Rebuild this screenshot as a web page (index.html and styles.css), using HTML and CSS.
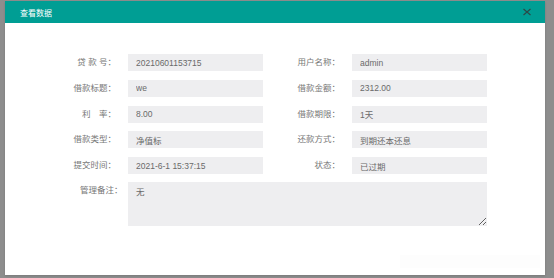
FILE: index.html
```html
<!DOCTYPE html>
<html lang="zh-CN">
<head>
    <meta charset="UTF-8">
    <title>查看数据</title>
    <link rel="stylesheet" href="styles.css">
</head>
<body>
    <div class="modal">
        <div class="modal-header">
            <span class="modal-title">查看数据</span>
            <span class="modal-close">
                <svg width="8" height="8" viewBox="0 0 8 8"><path d="M0.5 1L7.5 7M7.5 1L0.5 7" stroke="#2b4a48" stroke-width="1.2" fill="none"/></svg>
            </span>
        </div>
        <div class="modal-body">
            <div class="form">
                <label class="label">贷 款 号：</label>
                <input class="field" type="text" value="20210601153715" readonly>
                <label class="label">用户名称：</label>
                <input class="field" type="text" value="admin" readonly>

                <label class="label">借款标题：</label>
                <input class="field" type="text" value="we" readonly>
                <label class="label">借款金额：</label>
                <input class="field" type="text" value="2312.00" readonly>

                <label class="label">利　率：</label>
                <input class="field" type="text" value="8.00" readonly>
                <label class="label">借款期限：</label>
                <input class="field" type="text" value="1天" readonly>

                <label class="label">借款类型：</label>
                <input class="field" type="text" value="净值标" readonly>
                <label class="label">还款方式：</label>
                <input class="field" type="text" value="到期还本还息" readonly>

                <label class="label">提交时间：</label>
                <input class="field" type="text" value="2021-6-1 15:37:15" readonly>
                <label class="label">状态：</label>
                <input class="field" type="text" value="已过期" readonly>

                <label class="label label-top">管理备注：</label>
                <textarea class="remark" readonly>无</textarea>
            </div>
            <div class="modal-footer"></div>
        </div>
    </div>
</body>
</html>
```

FILE: styles.css
```css
body {
    margin: 0;
    height: 278px;
    background-color: #8d8d8d;
    font-family: "Liberation Sans", "Noto Sans CJK SC", sans-serif;
    overflow: hidden;
}
.modal {
    width: 540px;
    height: 274px;
    margin: 1px 0 0 5px;
    background-color: #fff;
    box-shadow: 0 1px 2px rgba(0, 0, 0, 0.15);
    display: flex;
    flex-direction: column;
}
.modal-header {
    height: 22px;
    background-color: #009e94;
    display: flex;
    align-items: center;
    justify-content: space-between;
    padding: 0 14px 0 15px;
}
.modal-title {
    color: #fff;
    font-size: 8px;
}
.modal-close {
    display: flex;
    align-items: center;
}
.modal-body {
    flex: 1;
    padding-top: 31px;
    display: flex;
    flex-direction: column;
    justify-content: space-between;
}
.form {
    display: grid;
    grid-template-columns: 111px 135px 65px 135px;
    grid-auto-rows: 17px;
    column-gap: 12px;
    row-gap: 8.8px;
}
.label {
    font-size: 8.5px;
    color: #777;
    text-align: right;
    line-height: 17px;
    white-space: nowrap;
}
.label-top {
    line-height: 12px;
    padding-top: 1px;
    margin-right: -6.5px;
}
.field {
    height: 17px;
    box-sizing: border-box;
    border: none;
    outline: none;
    background-color: #eeeef0;
    padding: 0 8px;
    font-family: inherit;
    font-size: 8.5px;
    color: #6a6a6a;
}
.remark {
    grid-column: span 3;
    grid-row: span 2;
    height: 44px;
    margin-top: -0.8px;
    box-sizing: border-box;
    border: none;
    outline: none;
    background-color: #eeeef0;
    padding: 3px 8px;
    font-family: inherit;
    font-size: 8.5px;
    color: #6a6a6a;
    resize: both;
}
.modal-footer {
    align-self: flex-end;
    width: 140px;
    height: 13px;
    margin: 0 5px 7px 0;
    background-color: #fdfdfd;
}
```
